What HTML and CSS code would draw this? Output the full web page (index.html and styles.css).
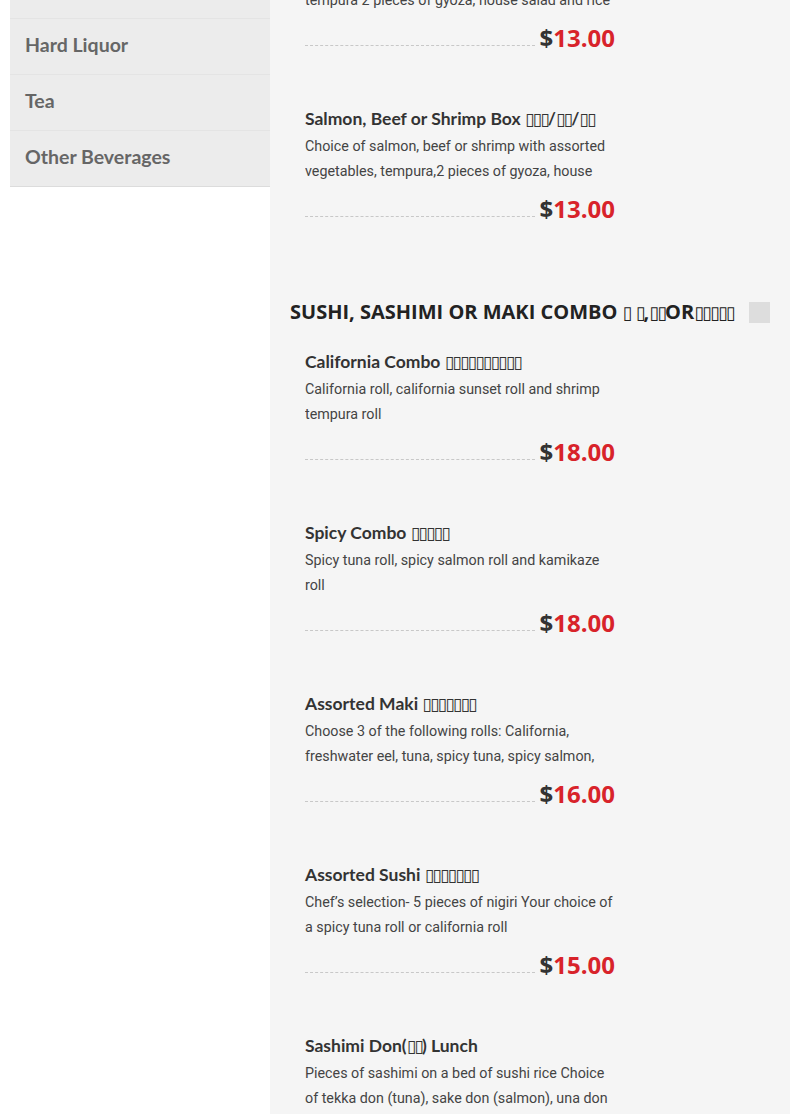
FILE: index.html
```html
<!DOCTYPE html>
<html>
<head>
<meta charset="utf-8">
<link rel="stylesheet" href="styles.css">
</head>
<body>
<div class="page">
  <nav class="sidebar">
    <div class="nav-item">Beer</div>
    <div class="nav-item">Hard Liquor</div>
    <div class="nav-item">Tea</div>
    <div class="nav-item">Other Beverages</div>
  </nav>
  <main class="content">
    <div class="item">
      <div class="item-title">Chicken Box <span class="tofu">▯▯▯</span></div>
      <div class="item-desc">Chicken teriyaki with assorted vegetables, tempura 2 pieces of gyoza, house salad and rice</div>
      <div class="price-row"><span class="dots"></span><span class="price"><span class="cur">$</span>13.00</span></div>
    </div>
    <div class="item">
      <div class="item-title">Salmon, Beef or Shrimp Box <span class="tofu">▯▯▯</span>/<span class="tofu">▯▯</span>/<span class="tofu">▯▯</span></div>
      <div class="item-desc">Choice of salmon, beef or shrimp with assorted vegetables, tempura,2 pieces of gyoza, house salad and rice</div>
      <div class="price-row"><span class="dots"></span><span class="price"><span class="cur">$</span>13.00</span></div>
    </div>

    <div class="section-head">
      <h2 class="section-title">SUSHI, SASHIMI OR MAKI COMBO <span class="tofu">▯</span> <span class="tofu">▯</span>,<span class="tofu">▯▯</span>OR<span class="tofu">▯▯▯▯▯</span></h2>
      <span class="toggle"></span>
    </div>

    <div class="item">
      <div class="item-title">California Combo <span class="tofu">▯▯▯▯▯▯▯▯▯▯</span></div>
      <div class="item-desc">California roll, california sunset roll and shrimp tempura roll</div>
      <div class="price-row"><span class="dots"></span><span class="price"><span class="cur">$</span>18.00</span></div>
    </div>
    <div class="item">
      <div class="item-title">Spicy Combo <span class="tofu">▯▯▯▯▯</span></div>
      <div class="item-desc">Spicy tuna roll, spicy salmon roll and kamikaze roll</div>
      <div class="price-row"><span class="dots"></span><span class="price"><span class="cur">$</span>18.00</span></div>
    </div>
    <div class="item">
      <div class="item-title">Assorted Maki <span class="tofu">▯▯▯▯▯▯▯</span></div>
      <div class="item-desc">Choose 3 of the following rolls: California, freshwater eel, tuna, spicy tuna, spicy salmon, salmon, yellowtail or cucumber</div>
      <div class="price-row"><span class="dots"></span><span class="price"><span class="cur">$</span>16.00</span></div>
    </div>
    <div class="item">
      <div class="item-title">Assorted Sushi <span class="tofu">▯▯▯▯▯▯▯</span></div>
      <div class="item-desc">Chef’s selection- 5 pieces of nigiri Your choice of a spicy tuna roll or california roll</div>
      <div class="price-row"><span class="dots"></span><span class="price"><span class="cur">$</span>15.00</span></div>
    </div>
    <div class="item">
      <div class="item-title">Sashimi Don(<span class="tofu">▯▯</span>) Lunch</div>
      <div class="item-desc">Pieces of sashimi on a bed of sushi rice Choice of tekka don (tuna), sake don (salmon), una don (eel) or chirashi</div>
      <div class="price-row"><span class="dots"></span><span class="price"><span class="cur">$</span>16.00</span></div>
    </div>
  </main>
</div>
</body>
</html>
```

FILE: styles.css
```css
html, body {
  margin: 0;
  padding: 0;
  background: #ffffff;
}

.page {
  display: flex;
  align-items: flex-start;
  margin-top: -64px;
  padding: 0 10px;
}

.sidebar {
  width: 260px;
  flex: none;
  margin-top: 27px;
  border-bottom: 1px solid #dcdcdc;
}

.nav-item {
  height: 56px;
  box-sizing: border-box;
  padding: 9px 15px 0;
  background: #ececec;
  border-bottom: 1px solid #e4e4e4;
  font-family: "Lato", "Open Sans", sans-serif;
  font-weight: 700;
  font-size: 19.5px;
  line-height: 34px;
  color: #666666;
}

.nav-item:last-child {
  border-bottom: none;
  height: 55px;
}

.content {
  flex: 1;
  background: #f5f5f5;
  padding: 0 20px;
  min-height: 1300px;
}

.item {
  padding-left: 15px;
  width: 310px;
  padding-bottom: 54px;
}

.item-title {
  font-family: "Lato", "Open Sans", sans-serif;
  font-weight: 700;
  font-size: 17.5px;
  line-height: 24px;
  height: 27px;
  color: #333333;
  white-space: nowrap;
}

.item-desc {
  font-family: "Roboto", "Noto Sans", sans-serif;
  font-size: 14.3px;
  line-height: 25px;
  height: 50px;
  overflow: hidden;
  color: #444444;
}

.price-row {
  display: flex;
  align-items: flex-end;
  margin-top: 10px;
  height: 30px;
}

.dots {
  flex: 1;
  border-bottom: 1px dashed #c8c8c8;
  margin: 0 5px 7px 0;
}

.price {
  font-family: "Open Sans", sans-serif;
  font-weight: 700;
  font-size: 24px;
  line-height: 30px;
  color: #d8232a;
}

.cur {
  color: #333333;
}

.section-head {
  display: flex;
  align-items: center;
  justify-content: space-between;
  margin: 9px 0 13px;
  height: 50px;
}

.section-title {
  margin: 0;
  font-family: "Open Sans", sans-serif;
  font-weight: 700;
  font-size: 20px;
  line-height: 28px;
  color: #222222;
  white-space: nowrap;
}

.section-title .tofu {
  font-size: 0.9em;
}

.toggle {
  width: 21px;
  height: 21px;
  background: #dddddd;
}

.tofu {
  font-family: "DejaVu Sans", sans-serif;
  font-weight: 400;
  font-size: 1em;
  letter-spacing: -2px;
}
```
